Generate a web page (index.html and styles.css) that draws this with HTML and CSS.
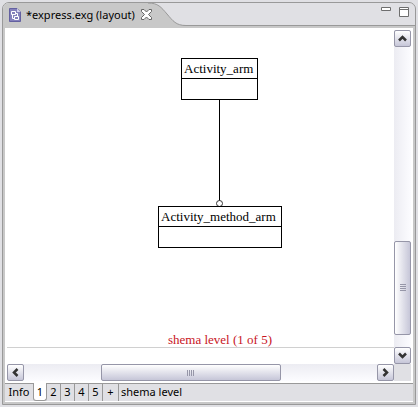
FILE: index.html
```html
<!DOCTYPE html>
<html lang="en">
<head>
<meta charset="utf-8">
<title>express.exg</title>
<link rel="stylesheet" href="styles.css">
</head>
<body>
<main class="frame">
  <header class="titlebar">
    <div class="tab">
      <svg class="file-icon" width="12" height="14" viewBox="0 0 12 14" aria-hidden="true">
        <path d="M.5 .5H8L11.500 4V13.500H.5Z" fill="#8480bb" stroke="#6360a0"/>
        <path d="M8 .5V4H11.500Z" fill="#d4d2ee"/>
        <path d="M2.500 3.500H6.500V6.500H2.500ZM5.500 8.500H9.500V11.500H5.500ZM3.500 6.500V10.500H5.500M6.500 5.500H8.500V8.500" fill="none" stroke="#fff"/>
      </svg>
      <button class="tab-title" type="button">*express.exg (layout)</button>
      <button class="tab-close" type="button" aria-label="Close">
        <svg width="11" height="11" viewBox="0 0 11 11"><path d="M.5 .5H3L5.500 3L8 .5H10.500V2.500L7.500 5.500L10.500 8.500V10.500H8L5.500 8L3 10.500H.5V8.500L3.500 5.500L.5 2.500Z" fill="#fff" stroke="#666"/></svg>
      </button>
    </div>
    <svg class="tab-curve" width="38" height="23" viewBox="0 0 38 23" aria-hidden="true">
      <path d="M0 0C10 0 13 4 19 11S28 22.500 38 22.500V23H0Z" fill="#c8c8c8"/>
      <path d="M0 0C10 0 13 4 19 11S28 22.500 38 22.500" fill="none" stroke="#999"/>
    </svg>
    <div class="window-buttons">
      <button type="button" aria-label="Minimize"><svg width="10" height="10" viewBox="0 0 10 10"><path d="M.5 .5H9.500V3.500H.5Z" fill="#fff" stroke="#6e6e6e"/></svg></button>
      <button type="button" aria-label="Maximize"><svg width="10" height="10" viewBox="0 0 10 10"><path d="M.5 .5H9.500V9.500H.5ZM.5 2.500H9.500" fill="#fff" stroke="#6e6e6e"/></svg></button>
    </div>
  </header>
  <section class="editor">
    <div class="canvas">
      <svg class="link" width="9" height="108" viewBox="0 0 9 108" aria-hidden="true">
        <path d="M4.500 0V101" stroke="#000"/>
        <circle cx="4.500" cy="103.500" r="3" fill="#fff" stroke="#333"/>
      </svg>
      <div class="entity activity">Activity_arm</div>
      <div class="entity method">Activity_method_arm</div>
      <div class="page-label">shema level (1 of 5)</div>
      <div class="page-edge"></div>
    </div>
    <div class="scroll vertical">
      <button type="button" aria-label="Scroll up"><svg width="9" height="7" viewBox="0 0 9 7"><path d="M1 5.500L4.500 2L8 5.500"/></svg></button>
      <span class="space-top"></span>
      <span class="thumb"><svg width="6" height="8" viewBox="0 0 6 8"><path d="M0 .5H6M0 2.500H6M0 4.500H6M0 6.500H6"/></svg></span>
      <span class="space-bottom"></span>
      <button type="button" aria-label="Scroll down"><svg width="9" height="7" viewBox="0 0 9 7"><path d="M1 1.500L4.500 5L8 1.500"/></svg></button>
    </div>
    <div class="scroll horizontal">
      <button type="button" aria-label="Scroll left"><svg width="7" height="9" viewBox="0 0 7 9"><path d="M5.500 1L2 4.500L5.500 8"/></svg></button>
      <span class="space-left"></span>
      <span class="thumb"><svg width="8" height="6" viewBox="0 0 8 6"><path d="M.5 0V6M2.500 0V6M4.500 0V6M6.500 0V6"/></svg></span>
      <span class="space-right"></span>
      <button type="button" aria-label="Scroll right"><svg width="7" height="9" viewBox="0 0 7 9"><path d="M1.500 1L5 4.500L1.500 8"/></svg></button>
    </div>
    <div class="corner"></div>
  </section>
  <nav class="pages">
    <button class="info" type="button">Info</button>
    <button class="current" type="button">1</button>
    <button type="button">2</button>
    <button type="button">3</button>
    <button type="button">4</button>
    <button type="button">5</button>
    <button class="add" type="button">+</button>
    <button class="level" type="button">shema level</button>
  </nav>
</main>
</body>
</html>
```

FILE: styles.css
```css
* {
  box-sizing: border-box;
}

body {
  display: flex;
  height: 100vh;
  margin: 0;
  padding: 2px;
  background: #e0e0e4;
  color: #000;
  font: 11px/16px "Noto Sans", sans-serif;
}

button {
  margin: 0;
  padding: 0;
  border: 0;
  background: none;
  color: inherit;
  font: inherit;
}

svg {
  display: block;
}

.frame {
  display: flex;
  flex: 1;
  flex-direction: column;
  overflow: hidden;
  border: 1px solid #999;
  border-radius: 7px 7px 0 0;
  background: #c8c8c8;
}

.titlebar {
  display: flex;
  height: 23px;
  border-bottom: 1px solid #999;
  background: #e0e0e4;
}

.tab {
  display: flex;
  height: 23px;
  padding-left: 6px;
  align-items: center;
  background: #c8c8c8;
}

.tab-title {
  margin-left: 5px;
  white-space: nowrap;
}

.tab-close {
  z-index: 1;
  margin-left: 6px;
}

.tab-curve {
  margin-left: -4px;
}

.window-buttons {
  display: flex;
  gap: 8px;
  align-items: flex-start;
  margin: 4px 6px 0 auto;
}

.editor {
  display: grid;
  flex: 1;
  grid-template-columns: 1fr 17px;
  grid-template-rows: 1fr 17px;
  margin: 2px 2px 0;
  padding: 2px;
  background: #fff;
}

.canvas {
  position: relative;
  overflow: hidden;
}

.entity {
  position: absolute;
  height: 42px;
  padding: 2px 2px 0;
  border: 1px solid #000;
  background: linear-gradient(#000, #000) 0 19px / 100% 1px no-repeat #fff;
  font: 13px/16px "Liberation Serif", serif;
  white-space: nowrap;
}

.activity {
  top: 28px;
  left: 174px;
  width: 77px;
}

.method {
  top: 176px;
  left: 151px;
  width: 124px;
}

.link {
  position: absolute;
  top: 70px;
  left: 208px;
}

.page-label {
  position: absolute;
  top: 302px;
  left: 161px;
  color: #c8141e;
  font: 13px/16px "Liberation Serif", serif;
  white-space: nowrap;
}

.page-edge {
  position: absolute;
  top: 317px;
  right: 0;
  left: 0;
  border-top: 1px solid #d0d0d0;
}

.scroll {
  display: flex;
}

.vertical {
  flex-direction: column;
  background: linear-gradient(90deg, #ececf2, #fcfcff);
}

.horizontal {
  background: linear-gradient(#ececf2, #fcfcff);
}

.scroll button {
  display: grid;
  width: 17px;
  height: 17px;
  place-items: center;
  border: 1px solid #9696a8;
  border-radius: 2px;
  background: linear-gradient(#fff, #c6c6d8);
}

.scroll button path {
  fill: none;
  stroke: #333;
  stroke-width: 2.5;
}

.thumb {
  display: grid;
  place-items: center;
  border: 1px solid #9696a8;
  border-radius: 2px;
}

.thumb path {
  stroke: #9696a8;
}

.vertical .thumb {
  flex: 93;
  background: linear-gradient(90deg, #fff, #c6c6d8);
}

.horizontal .thumb {
  flex: 179;
  background: linear-gradient(#fff, #c6c6d8);
}

.space-top {
  flex: 195;
}

.space-bottom {
  flex: 12;
}

.space-left {
  flex: 77;
}

.space-right {
  flex: 97;
}

.corner {
  background: #e0e0e4;
}

.pages {
  display: flex;
  height: 19px;
  margin: 0 2px 2px;
  border-top: 1px solid #999;
  border-bottom: 1px solid #fff;
  background: #e0e0e4;
}

.pages button {
  width: 14px;
  padding-bottom: 2px;
  border-right: 1px solid #999;
  white-space: nowrap;
}

.pages .info {
  width: 28px;
  border-right: 0;
}

.pages .current {
  height: 18px;
  margin-top: -1px;
  padding-bottom: 0;
  border: 1px solid #999;
  border-top: 0;
  border-radius: 0 0 3px 3px;
  background: #fff;
}

.pages .add {
  width: 16px;
}

.pages .level {
  width: auto;
  padding-left: 2px;
  border-right: 0;
}
```
